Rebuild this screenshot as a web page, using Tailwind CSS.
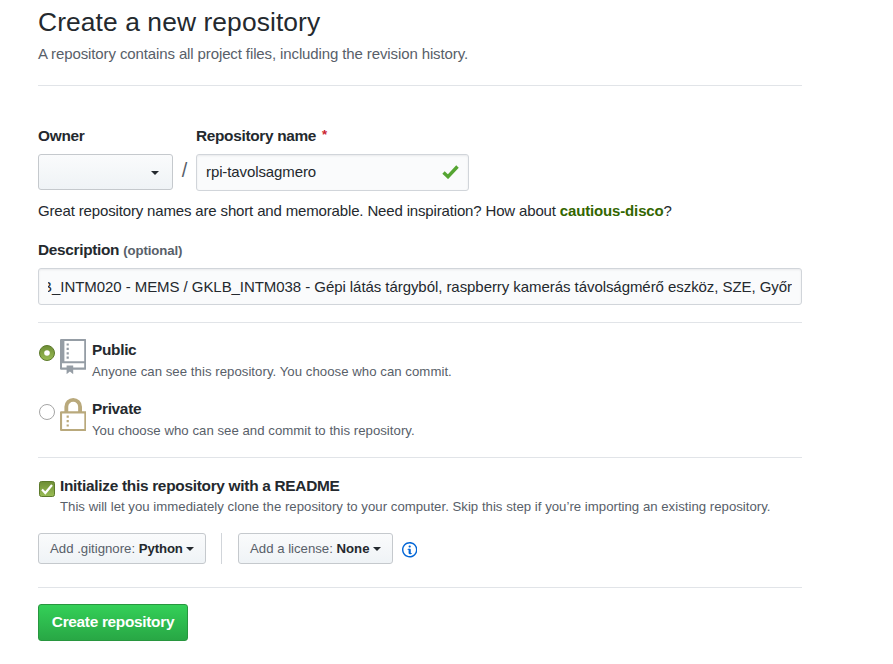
<!DOCTYPE html>
<html lang="en">
<head>
<meta charset="utf-8">
<title>Create a new repository</title>
<script src="https://cdn.jsdelivr.net/npm/@tailwindcss/browser@4"></script>
</head>
<body class="bg-white font-['Liberation_Sans',Arial,sans-serif] text-[15px] leading-5 tracking-[-0.1px] whitespace-nowrap text-[#24292e]">
<main class="ml-[38px] w-[764px]">
  <header class="h-[86px] border-b border-[#e1e4e8]">
    <h1 class="h-11 text-[26.4px] leading-[44px] tracking-[0.09px]"><span>Create a new repository</span></h1>
    <p class="tracking-[-0.115px] text-[#586069]"><span>A repository contains all project files, including the revision history.</span></p>
  </header>

  <div class="mt-10 flex h-[65px]">
    <div class="w-[135px]">
      <div class="h-5 text-[15.4px] leading-5 font-bold tracking-[-0.28px]"><span>Owner</span></div>
      <button class="mt-2 flex h-9 w-[135px] items-center justify-end rounded-[3px] border border-[#c5c9cd] bg-linear-to-b from-[#fafbfc] to-[#eff3f6] pr-[13px]" aria-label="Owner">
        <svg class="mt-[2px] h-1 w-2" viewBox="0 0 8 4"><path d="M0 0h8L4 4z" fill="#24292e"/></svg>
      </button>
    </div>
    <div class="w-[23px] pt-[34px] text-center text-[19.8px] leading-5 text-[#586069]">/</div>
    <div class="w-[273px]">
      <div class="flex h-5 text-[15.4px] leading-5 font-bold tracking-[-0.32px]"><span>Repository name</span><span class="ml-[6px] text-[13.2px] leading-[18px] text-[#cb2431]">*</span></div>
      <div class="mt-2 flex h-[37px] items-center justify-between rounded-[3px] border border-[#d1d5da] bg-[#fafbfc] pr-[9px] pb-px pl-[9px] tracking-[-0.1px] shadow-[inset_0_1px_2px_rgba(27,31,35,0.075)]">
        <span>rpi-tavolsagmero</span>
        <svg class="h-[14px] w-[17px]" viewBox="0 0 17 14"><path d="M1.500 7.500 6 11.700 15.500 1.500" fill="none" stroke="#55a532" stroke-width="3.400"/></svg>
      </div>
    </div>
  </div>

  <p class="mt-[10px] tracking-[-0.155px]"><span>Great repository names are short and memorable. Need inspiration? How about <strong class="text-[#336600]">cautious-disco</strong>?</span></p>

  <div class="mt-[19px] flex h-5 gap-1 text-[15.4px] leading-5 font-bold tracking-[-0.32px]"><span>Description</span><span class="pt-px text-[13.2px] tracking-[-0.08px] text-[#586069]">(optional)</span></div>
  <div class="mt-2 flex h-[37px] items-center rounded-[3px] border border-[#d1d5da] bg-[#fafbfc] px-[9px] tracking-[-0.06px] shadow-[inset_0_1px_2px_rgba(27,31,35,0.075)]">
    <div class="flex w-full justify-end overflow-hidden pt-px"><span>B_INTM020 - MEMS / GKLB_INTM038 - Gépi látás tárgyból, raspberry kamerás távolságmérő eszköz, SZE, Győr</span></div>
  </div>

  <section class="mt-[17px] h-[135px] border-t border-[#e1e4e8] pt-4">
    <div class="flex h-[59px]">
      <svg class="mt-[6px] ml-px h-4 w-4" viewBox="0 0 16 16">
        <defs><linearGradient id="g" x1="0" y1="0" x2="0" y2="1"><stop offset="0" stop-color="#6d8d35"/><stop offset="1" stop-color="#9abd55"/></linearGradient></defs>
        <circle cx="8" cy="8" r="7.500" fill="url(#g)" stroke="#5d7a2c"/><circle cx="8" cy="8" r="2.800" fill="#fff"/>
      </svg>
      <svg class="ml-[5px] h-[35.2px] w-[26.4px] fill-[#959da5]" viewBox="0 0 24 32"><path fill-rule="evenodd" d="M1 0h22a1 1 0 0 1 1 1v26a1 1 0 0 1-1 1H12v4l-3-2.500L6 32v-4H1a1 1 0 0 1-1-1V1a1 1 0 0 1 1-1zm3 1.800V20.200h18V1.800zM1.800 22v4H6v-2h6v2h10v-4zM6 4h2v2H6zm0 4h2v2H6zm0 4h2v2H6zm0 4h2v2H6z"/></svg>
      <div class="ml-[5.600px]">
        <div class="pt-px text-[15.4px] leading-5 font-bold tracking-[-0.3px]"><span>Public</span></div>
        <div class="mt-[2px] text-[13.2px] tracking-[0.04px] text-[#586069]"><span>Anyone can see this repository. You choose who can commit.</span></div>
      </div>
    </div>
    <div class="flex">
      <svg class="mt-[6px] ml-px h-4 w-4" viewBox="0 0 16 16"><circle cx="8" cy="8" r="7.500" fill="#fff" stroke="#a5a5a5"/></svg>
      <svg class="ml-[5px] h-[35.2px] w-[26.4px] fill-[#b9a97c]" viewBox="0 0 24 32"><path fill-rule="evenodd" d="M4 12V8a8 8 0 0 1 16 0v4h3a1 1 0 0 1 1 1v16a1 1 0 0 1-1 1H1a1 1 0 0 1-1-1V13a1 1 0 0 1 1-1zm3.500 0h9V8a4.500 4.500 0 0 0-9 0zM1.900 14v14.200h20.200V14zM6 16h2v2H6zm0 4h2v2H6zm0 4h2v2H6z"/></svg>
      <div class="ml-[5.600px]">
        <div class="pt-px text-[15.4px] leading-5 font-bold tracking-[-0.3px]"><span>Private</span></div>
        <div class="mt-[2px] text-[13.2px] tracking-[0.03px] text-[#586069]"><span>You choose who can see and commit to this repository.</span></div>
      </div>
    </div>
  </section>

  <section class="flex h-[76px] border-t border-[#e1e4e8] pt-[17px]">
    <svg class="mt-[6px] ml-px h-4 w-4" viewBox="0 0 16 16"><rect x=".5" y=".5" width="15" height="15" rx="2" fill="url(#g)" stroke="#5d7a2c"/><path d="M3 8.500 6.300 12 13 4" fill="none" stroke="#fff" stroke-width="2.200"/></svg>
    <div class="ml-[5px]">
      <div class="pt-px text-[15.4px] leading-5 font-bold tracking-[-0.28px]"><span>Initialize this repository with a README</span></div>
      <div class="mt-px text-[13.2px] tracking-[0.016px] text-[#586069]"><span>This will let you immediately clone the repository to your computer. Skip this step if you’re importing an existing repository.</span></div>
    </div>
  </section>

  <div class="flex h-[31px] text-[13.2px] tracking-normal text-[#586069]">
    <button class="flex w-[168px] items-center justify-between rounded-[3px] border border-[#c5c9cd] bg-linear-to-b from-[#fafbfc] to-[#eff3f6] px-[11px]"><span>Add .gitignore: <b class="tracking-[-0.1px] text-[#24292e]">Python</b></span><svg class="h-1 w-2" viewBox="0 0 8 4"><path d="M0 0h8L4 4z" fill="#24292e"/></svg></button>
    <div class="ml-[15px] w-px bg-[#d1d5da]"></div>
    <button class="ml-4 flex w-[155px] items-center justify-between rounded-[3px] border border-[#c5c9cd] bg-linear-to-b from-[#fafbfc] to-[#eff3f6] px-[11px]"><span>Add a license: <b class="text-[#24292e]">None</b></span><svg class="h-1 w-2" viewBox="0 0 8 4"><path d="M0 0h8L4 4z" fill="#24292e"/></svg></button>
    <svg class="mt-2 ml-[9px] h-[17.6px] w-[15.4px] fill-[#0366d6]" viewBox="0 0 14 16"><path fill-rule="evenodd" d="M6.300 5.690a.942.942 0 0 1-.28-.7c0-.28.09-.52.28-.7.19-.18.42-.28.7-.28.28 0 .52.09.7.28.18.19.28.42.28.7 0 .28-.09.52-.28.7a1 1 0 0 1-.7.3c-.28 0-.52-.11-.7-.3zM8 7.990c-.02-.25-.11-.48-.31-.69-.2-.19-.42-.3-.69-.31H6c-.27.02-.48.13-.69.31-.2.2-.3.44-.31.69h1v3c.02.27.11.5.31.69.2.2.42.31.69.31h1c.27 0 .48-.11.69-.31.2-.19.3-.42.31-.69H8V7.980v.01zM7 2.300c-3.140 0-5.700 2.540-5.700 5.680 0 3.140 2.560 5.700 5.700 5.700s5.700-2.550 5.700-5.700c0-3.150-2.560-5.690-5.700-5.690v.01zM7 .98c3.860 0 7 3.140 7 7s-3.140 7-7 7-7-3.120-7-7 3.140-7 7-7z"/></svg>
  </div>

  <div class="mt-[23px] border-t border-[#e1e4e8] pt-4">
    <button class="h-[37px] w-[150px] rounded-[3px] border border-[#28963f] bg-linear-to-b from-[#34d058] to-[#28a745] pb-[2px] text-[15.4px] leading-5 font-bold tracking-[-0.3px] text-white"><span>Create repository</span></button>
  </div>
</main>
</body>
</html>
